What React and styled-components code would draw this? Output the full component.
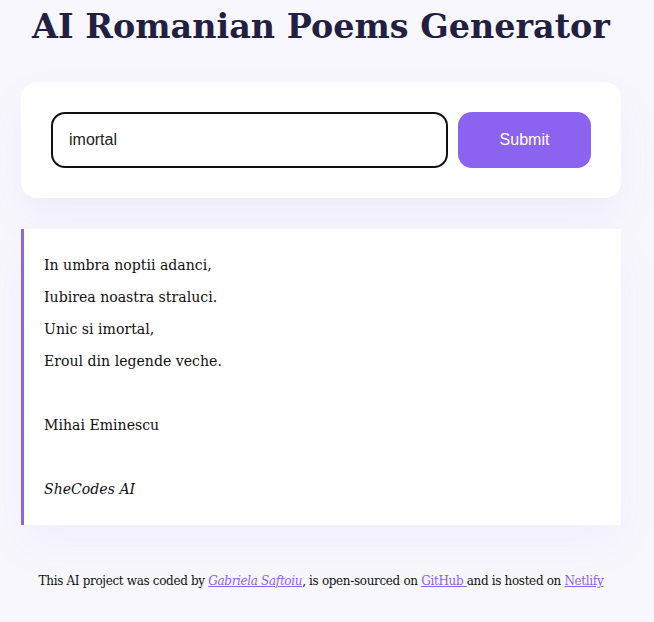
import styled, { createGlobalStyle } from "styled-components";

const GlobalStyle = createGlobalStyle`
  body {
    margin: 0;
    background: #f8f7fd;
    font-family: "DejaVu Serif", Georgia, serif;
    color: #111;
  }
`;

const Page = styled.div`
  width: 600px;
  margin: 0 21px;
  padding-top: 5px;
`;

const Title = styled.h1`
  margin: 0 0 33px;
  text-align: center;
  font-size: 33.4px;
  line-height: 44px;
  font-weight: 700;
  color: #231f40;
`;

const FormCard = styled.form`
  display: flex;
  gap: 10px;
  padding: 30px;
  background: #fff;
  border-radius: 16px;
  box-shadow: 0 20px 40px rgba(140, 120, 220, 0.08);
`;

const SearchInput = styled.input`
  flex: 1;
  height: 56px;
  box-sizing: border-box;
  border: 2px solid #111;
  border-radius: 14px;
  padding: 0 16px;
  font-family: "Liberation Sans", Arial, sans-serif;
  font-size: 16px;
  color: #222;
  outline: none;
`;

const SubmitButton = styled.button`
  width: 133px;
  height: 56px;
  border: none;
  border-radius: 14px;
  background: #8c62f0;
  color: #fff;
  font-family: "Liberation Sans", Arial, sans-serif;
  font-size: 16px;
`;

const Poem = styled.div`
  margin-top: 31px;
  padding: 20px;
  background: #fff;
  border-left: 3px solid #8c62f0;
  font-size: 14.1px;
  line-height: 32px;
  box-shadow: 0 20px 40px rgba(140, 120, 220, 0.06);
`;

const Signature = styled.em``;

const Footer = styled.footer`
  margin-top: 49px;
  text-align: center;
  font-size: 12px;
  letter-spacing: -0.34px;
  color: #111;
`;

const FooterLink = styled.a`
  color: #8c62f0;
  font-style: ${(p) => (p.$italic ? "italic" : "normal")};
`;

export default function App() {
  return (
    <>
      <GlobalStyle />
      <Page>
        <Title>AI Romanian Poems Generator</Title>
        <FormCard onSubmit={(e) => e.preventDefault()}>
          <SearchInput defaultValue="imortal" />
          <SubmitButton type="submit">Submit</SubmitButton>
        </FormCard>
        <Poem>
          In umbra noptii adanci,
          <br />
          Iubirea noastra straluci.
          <br />
          Unic si imortal,
          <br />
          Eroul din legende veche.
          <br />
          <br />
          Mihai Eminescu
          <br />
          <br />
          <Signature>SheCodes AI</Signature>
        </Poem>
        <Footer>
          This AI project was coded by{" "}
          <FooterLink href="#" $italic>
            Gabriela Saftoiu
          </FooterLink>
          , is open-sourced on <FooterLink href="#">GitHub </FooterLink>and is
          hosted on <FooterLink href="#">Netlify</FooterLink>
        </Footer>
      </Page>
    </>
  );
}
